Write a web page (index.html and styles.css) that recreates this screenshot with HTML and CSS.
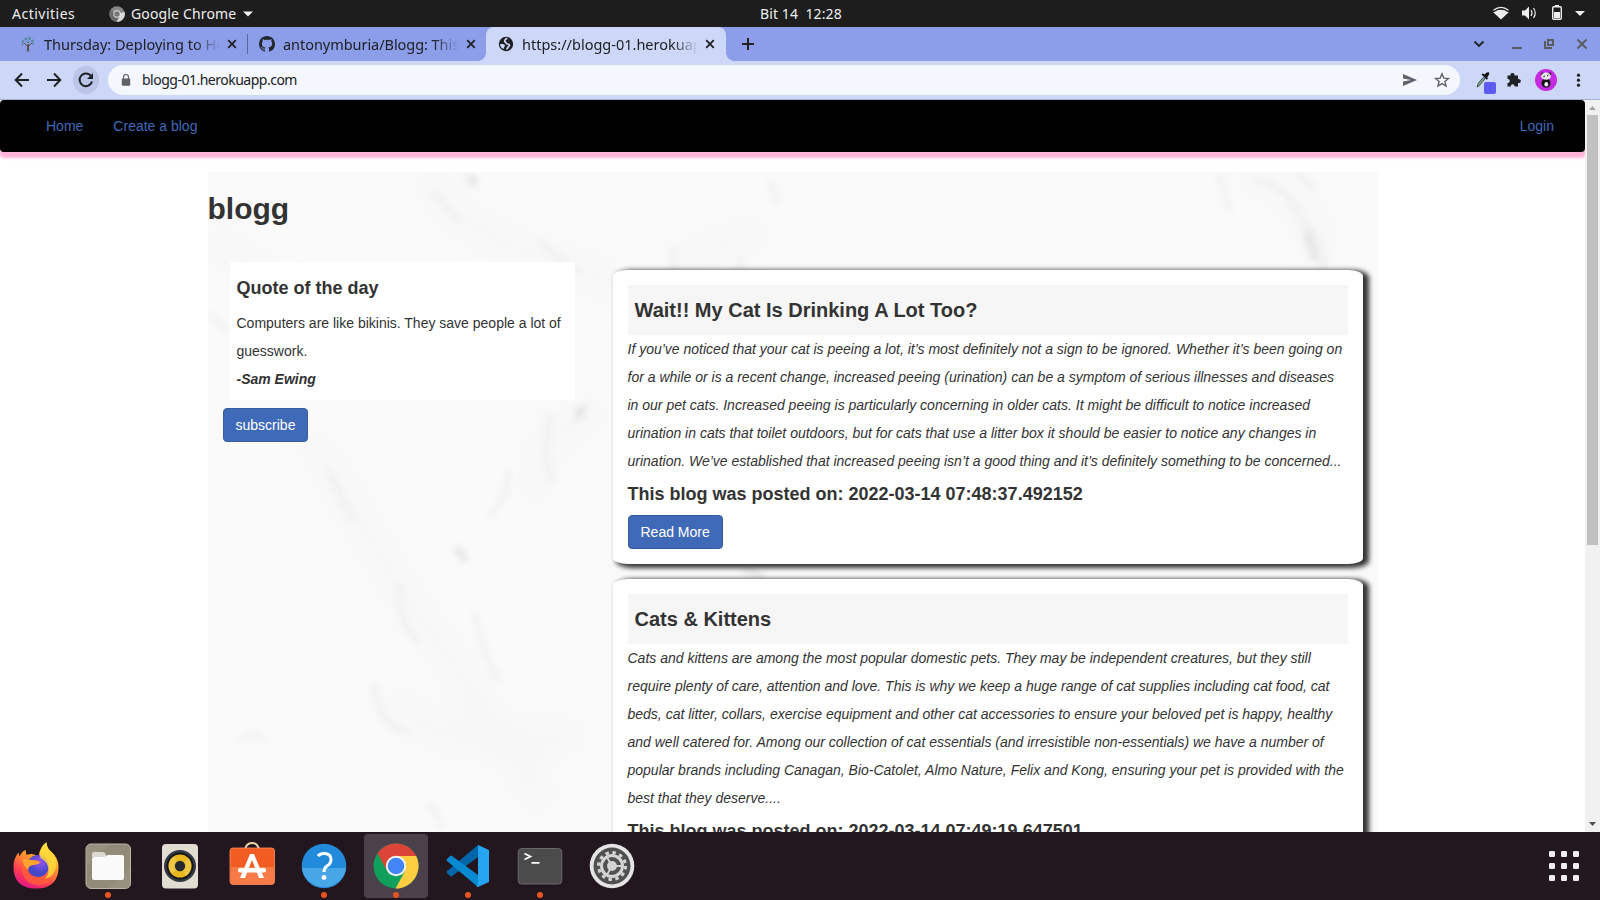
FILE: index.html
```html
<!DOCTYPE html>
<html lang="en">
<head>
<meta charset="utf-8">
<title>blogg</title>
<link rel="stylesheet" href="styles.css">
</head>
<body>
<div class="desktop">
  <header class="topbar">
    <span class="activities">Activities</span>
    <svg class="app-icon" width="16" height="16" viewBox="0 0 16 16"><circle cx="8" cy="8" r="7.700" fill="#888"/><path d="M8 8 15.600 6A7.700 7.700 0 0 1 7.500 15.700L11 9.500Z" fill="#d9d9d9"/><path d="M8 8 1.500 4A7.700 7.700 0 0 0 7.500 15.700L10 11Z" fill="#6a6a6a"/><circle cx="8" cy="8" r="3.700" fill="#ddd"/><circle cx="8" cy="8" r="2.700" fill="#777"/></svg>
    <span class="app-name">Google Chrome</span>
    <svg class="app-caret" width="10" height="6" viewBox="0 0 10 6"><path d="M0 .5h10L5 5.500z" fill="#eee"/></svg>
    <span class="clock">Bit 14&nbsp; 12:28</span>
    <svg class="tray" width="100" height="27" viewBox="0 0 100 27" fill="#eee">
      <path d="M3.200 12.200Q11 6.200 18.800 12.200L11 19.500Z"/><path d="M3.500 10.200Q11 4.500 18.500 10.200" fill="none" stroke="#eee" stroke-width="1.300"/><path d="M4 11.600Q11 6.700 18 11.600" fill="none" stroke="#1d1d1d" stroke-width="1"/>
      <path d="M32 10.500h3l4-4v13l-4-4h-3z"/><path d="M41 10q2 3 0 6M43.500 8q3.500 5 0 10" fill="none" stroke="#eee" stroke-width="1.200"/>
      <rect x="62.700" y="6.700" width="8.600" height="12.600" rx="1" fill="none" stroke="#eee" stroke-width="1.400"/><path d="M65 5h4v1.500h-4zM64 12h6v6h-6z"/>
      <path d="M85 11h10l-5 5z"/>
    </svg>
  </header>

  <div class="tabs">
    <div class="tab first">
      <svg width="16" height="16" viewBox="0 0 16 16"><path d="M7.300 15.500 8 8M8.700 15.500 8.500 8M8 11 4 7M8.500 10 12 7" stroke="#594f49" stroke-width="1" fill="none"/><g fill="#55889a"><circle cx="3" cy="5.500" r="1.300"/><circle cx="6" cy="3" r="1.400"/><circle cx="9.500" cy="2.500" r="1.400"/><circle cx="12.500" cy="5" r="1.400"/><circle cx="8" cy="6" r="1.300"/><circle cx="2.500" cy="8" r="1"/><circle cx="13" cy="8" r="1"/></g></svg>
      <span class="tab-title">Thursday: Deploying to Heroku</span>
      <svg class="close" width="10" height="10" viewBox="0 0 10 10"><path d="M1.200 1.200l7.600 7.600M8.800 1.200 1.200 8.800"/></svg>
    </div>
    <div class="tab second">
      <svg width="16" height="16" viewBox="0 0 16 16"><path fill="#24292f" d="M8 0C3.580 0 0 3.580 0 8c0 3.540 2.290 6.530 5.470 7.590.4.070.55-.17.55-.38 0-.19-.01-.82-.01-1.490-2.010.37-2.530-.49-2.690-.94-.09-.23-.48-.94-.82-1.130-.28-.15-.68-.52-.01-.53.63-.01 1.080.58 1.230.82.72 1.210 1.870.87 2.330.66.07-.52.28-.87.51-1.070-1.780-.2-3.640-.89-3.640-3.950 0-.87.31-1.590.82-2.150-.08-.2-.36-1.020.08-2.120 0 0 .67-.21 2.200.82.64-.18 1.320-.27 2-.27s1.360.09 2 .27c1.530-1.040 2.200-.82 2.200-.82.44 1.100.16 1.920.08 2.120.51.56.82 1.270.82 2.150 0 3.070-1.870 3.750-3.650 3.950.29.25.54.73.54 1.480 0 1.070-.01 1.930-.01 2.200 0 .21.15.46.55.38A8.010 8.010 0 0 0 16 8c0-4.420-3.580-8-8-8z"/></svg>
      <span class="tab-title">antonymburia/Blogg: This is</span>
      <svg class="close" width="10" height="10" viewBox="0 0 10 10"><path d="M1.200 1.200l7.600 7.600M8.800 1.200 1.200 8.800"/></svg>
    </div>
    <div class="tab active">
      <svg width="16" height="16" viewBox="0 0 16 16"><circle cx="8" cy="8" r="7.200" fill="#202124"/><path d="M9.300 2.200C8 3 6.500 3.600 6.700 5c.2 1.200 1.200.8 1.300 1.900.1 1.200 1.600.9 2.700 1.300 1.200.5.600 2-.4 2.700-.9.700-.6 1.800-1.800 2.600" fill="none" stroke="#cdd7f8" stroke-width="1.700"/><path d="M2 8.300c1.500-.4 4-.2 4.800.9.700 1-.8 1.300-.7 2.200 0 .8-.6 1.100-1.200 1.400C3.200 11.800 2.100 10.200 2 8.300z" fill="#cdd7f8"/></svg>
      <span class="tab-title">https://blogg-01.herokuapp.com</span>
      <svg class="close" width="10" height="10" viewBox="0 0 10 10"><path d="M1.200 1.200l7.600 7.600M8.800 1.200 1.200 8.800"/></svg>
    </div>
    <svg class="new-tab" width="12" height="12" viewBox="0 0 12 12"><path d="M6 0v12M0 6h12" stroke="#202124" stroke-width="2"/></svg>
    <svg class="window-controls" width="120" height="34" viewBox="0 0 120 34" fill="none" stroke="#5a5c60" stroke-width="2">
      <path d="M4.500 14.500 9 19l4.500-4.500" stroke="#202124" stroke-width="1.800"/><path d="M42 21h10"/><path d="M78 13h5v5h-5zM75 14v7h7"/><path d="M107.500 12.500l9 9M116.500 12.500l-9 9"/>
    </svg>
  </div>

  <div class="toolbar">
    <svg class="nav-arrows" width="108" height="38" viewBox="0 0 108 38" fill="none" stroke="#202124" stroke-width="2">
      <path d="M29 19H16M22 12.500 15.700 19 22 25.500M47 19h13M54 12.500 60.300 19 54 25.500"/>
      <ellipse cx="86" cy="19" rx="13" ry="14" fill="#bac5e8" stroke="none"/>
      <path d="M91.300 15.500A6.300 6.300 0 1 0 92 20.500"/><path d="M93 12v6h-6z" fill="#202124" stroke="none"/>
    </svg>
    <div class="address">
      <svg width="10" height="12" viewBox="0 0 10 12"><path d="M2.500 5V3a2.500 2.500 0 0 1 5 0v2" fill="none" stroke="#5f6368" stroke-width="1.200"/><rect x=".8" y="4.500" width="8.400" height="7.300" rx="1" fill="#5f6368"/></svg>
      <span class="url">blogg-01.herokuapp.com</span>
      <svg class="address-actions" width="50" height="16" viewBox="0 0 50 16"><path d="M1 2 15 8 1 14V9.500L9 8 1 6.500z" fill="#5f6368"/><path d="m40 1.800 1.800 4.300 4.600.4-3.500 3 1.100 4.600-4-2.500-4 2.500 1.100-4.600-3.500-3 4.600-.4z" fill="none" stroke="#5f6368" stroke-width="1.400"/></svg>
    </div>
    <svg class="extensions" width="140" height="38" viewBox="0 0 140 38">
      <path d="M17.300 26q0-3 2-5l4-4.500 1.700 1.500-4 4.500q-1.500 2.500-3.700 3.500z" fill="#7fae92" stroke="#26352c" stroke-width=".8"/><path d="M21.500 13.500l1.500-1 1.500 1q2.500-3 4.200-2.200 1.700 1.200-1.500 5l.8 1-1.200 1.500z" fill="#111"/>
      <rect x="24" y="21" width="12" height="12" rx="2" fill="#5c5cf5"/>
      <path d="M47.500 14.500h3c-.6-3.300 4.600-3.300 4 0H58v3.500c3.800-.5 3.800 4.500 0 4V25.500h-3.500c.3-3-4-3-3.700 0h-3.300v-3.500c3 .3 3-4.200 0-3.900z" fill="#202124"/>
      <circle cx="86" cy="19" r="11" fill="#c42ae0"/><ellipse cx="86" cy="22" rx="4.500" ry="4.700" fill="#141414"/><circle cx="82.500" cy="12.700" r="1.300" fill="#222"/><circle cx="90" cy="12.700" r="1.300" fill="#222"/><ellipse cx="86" cy="15.200" rx="4.800" ry="3.600" fill="#e5e5e5"/><path d="M83.300 15.800l1.700-.8M87 15l1.500-1" stroke="#222"/><ellipse cx="86.300" cy="23.300" rx="1.900" ry="2.200" fill="#eee"/>
      <g fill="#202124"><circle cx="118.500" cy="14.200" r="1.600"/><circle cx="118.500" cy="19.200" r="1.600"/><circle cx="118.500" cy="24.200" r="1.600"/></g>
    </svg>
  </div>

  <div class="viewport">
    <main class="page">
      <nav class="navbar">
        <a>Home</a>
        <a>Create a blog</a>
        <a class="login">Login</a>
      </nav>
      <section class="container">
        <svg class="marble" width="1170" height="660" viewBox="0 0 1170 660" fill="none" stroke="#777">
          <defs><filter id="soft" x="-20%" y="-20%" width="140%" height="140%"><feGaussianBlur stdDeviation="3.500"/></filter><filter id="haze" x="-20%" y="-20%" width="140%" height="140%"><feGaussianBlur stdDeviation="16"/></filter></defs>
          <g filter="url(#haze)" opacity=".025" stroke-width="34"><path d="M215 0Q260 70 350 90T480 210M400 240Q320 250 330 330M0 60Q90 130 150 180M100 260L200 430Q270 520 340 640M180 520Q220 590 380 560M560 60Q480 80 460 100M1030 0Q1120 20 1110 100"/></g>
          <g filter="url(#soft)" stroke-width="4" opacity=".09"><path d="M258 0l6 16M225 20l25 30M330 70l40 30M465 75v30M533 85q-2 40-30 60M562 8l8 24M1045 8q28 2 40 25t25 35q10 20 3 40M1010 0l12 40M1090 0l18 18M380 230l-12 20M342 240q-8 40 2 70M300 300l-4 25-14 20M190 410q0 40 20 60M265 440q12 40 25 70M30 570q15-15 28 0M165 510q5 45 35 50M220 630l15 25M120 300l25 50M0 140l20 20"/></g>
          <path filter="url(#soft)" opacity=".22" stroke-width="5" d="M248 375l10 14M374 236l-5 8M1098 60l10 28M264 4l3 8M535 396l20 8"/>
        </svg>
        <h1 class="site-title">blogg</h1>
        <div class="columns">
          <aside class="sidebar">
            <div class="quote">
              <h4>Quote of the day</h4>
              <p>Computers are like bikinis. They save people a lot of guesswork.</p>
              <p class="author">-Sam Ewing</p>
            </div>
            <a class="btn">subscribe</a>
          </aside>
          <div class="posts">
            <article class="post">
              <h3>Wait!! My Cat Is Drinking A Lot Too?</h3>
              <p>If you’ve noticed that your cat is peeing a lot, it’s most definitely not a sign to be ignored. Whether it’s been going on<br>for a while or is a recent change, increased peeing (urination) can be a symptom of serious illnesses and diseases<br>in our pet cats. Increased peeing is particularly concerning in older cats. It might be difficult to notice increased<br>urination in cats that toilet outdoors, but for cats that use a litter box it should be easier to notice any changes in<br>urination. We’ve established that increased peeing isn’t a good thing and it’s definitely something to be concerned...</p>
              <h4>This blog was posted on: 2022-03-14 07:48:37.492152</h4>
              <a class="btn">Read More</a>
            </article>
            <article class="post">
              <h3>Cats &amp; Kittens</h3>
              <p>Cats and kittens are among the most popular domestic pets. They may be independent creatures, but they still<br>require plenty of care, attention and love. This is why we keep a huge range of cat supplies including cat food, cat<br>beds, cat litter, collars, exercise equipment and other cat accessories to ensure your beloved pet is happy, healthy<br>and well catered for. Among our collection of cat essentials (and irresistible non-essentials) we have a number of<br>popular brands including Canagan, Bio-Catolet, Almo Nature, Felix and Kong, ensuring your pet is provided with the<br>best that they deserve....</p>
              <h4>This blog was posted on: 2022-03-14 07:49:19.647501</h4>
              <a class="btn">Read More</a>
            </article>
          </div>
        </div>
      </section>
    </main>
    <div class="scrollbar">
      <svg width="15" height="15" viewBox="0 0 15 15"><path d="M4 10h7L7.500 6z" fill="#a3a3a3"/></svg>
      <div class="thumb"></div>
      <svg class="down" width="15" height="15" viewBox="0 0 15 15"><path d="M4 5h7L7.500 9z" fill="#505050"/></svg>
    </div>
  </div>

  <footer class="dock">
    <div class="launcher">
      <svg viewBox="0 0 64 64"><defs><linearGradient id="fx" x1=".8" y1="0" x2=".3" y2="1"><stop offset="0" stop-color="#fff44f"/><stop offset=".4" stop-color="#ff9c2a"/><stop offset=".75" stop-color="#ff3e50"/><stop offset="1" stop-color="#e01585"/></linearGradient><radialGradient id="fxp" cx=".6" cy=".3"><stop offset="0" stop-color="#9a55f0"/><stop offset="1" stop-color="#4548c8"/></radialGradient></defs><path d="M9.500 33q0-9 5-14.500l1 4q2-5 6-6.500l1 5q7-3 12 2 1-10 8-15 0 6 5 10 7 6 7 15 0 21.500-22.500 21.500T9.500 33z" fill="url(#fx)"/><circle cx="34" cy="32" r="11" fill="url(#fxp)"/><path d="M18 27q7-2 12-1 6 0 6 2-3 2-8 3-3 0-4 4 0 9 12 8 14 0 15-14 3 20-16 22-19 0-17-24z" fill="#ff6235" opacity=".75"/><path d="M18 25q6 1 11 1 6 1 7 3-3 2-7 2-5 1-5 5-4-3-6-11z" fill="#ffa52e"/><path d="M42.500 9q-9 8-6 15 8 4 8 12 0 6-4 9 11-2 12-14 0-9-5-13-5-4-5-9z" fill="#ffdb3b" opacity=".85"/></svg>
    </div>
    <div class="launcher running">
      <svg viewBox="0 0 64 64"><rect x="10" y="10" width="44.500" height="44.500" rx="5" fill="#928b78" stroke="#bdb6a5"/><path d="M11 32 32 11H16q-5 0-5 5zM33 54l21-21v16q0 5-5 5z" fill="#a39c8a" opacity=".4"/><path d="M16 23v-3q0-2 2-2h9q2 0 3 3l1 2z" fill="#dcd9d2"/><path d="M16 25q0-2 2-2h10l4-2h14q2 0 2 2v21q0 2-2 2H18q-2 0-2-2z" fill="#fafafa"/></svg>
    </div>
    <div class="launcher">
      <svg viewBox="0 0 64 64"><rect x="14" y="10" width="36" height="44.500" rx="4" fill="#e2ddd2"/><circle cx="32" cy="32" r="16" fill="#343943"/><circle cx="32" cy="32" r="13.500" fill="#15181d"/><circle cx="32" cy="32" r="11.500" fill="#e8b61f"/><path d="M32 32 40 24A11.500 11.500 0 0 1 38 41.800zM32 32 24 40A11.500 11.500 0 0 1 26 22.200z" fill="#f7d365" opacity=".5"/><circle cx="32" cy="32" r="5.200" fill="#25282d"/></svg>
    </div>
    <div class="launcher">
      <svg viewBox="0 0 64 64"><path d="M25 17v-1q1-7 7-7t7 7v1" fill="none" stroke="#ead7ad" stroke-width="2"/><rect x="10" y="14" width="44.500" height="36.500" rx="3" fill="#f05c22" stroke="#fb9063" stroke-width=".8"/><path d="M11 33h43v15q0 2-2 2H13q-2 0-2-2z" fill="#ff986a" opacity=".5"/><path d="M30 20h4l10 24h-5L32 26l-7 18h-5z" fill="#fff"/><rect x="18" y="34" width="28" height="4.500" rx="2" fill="#fff"/></svg>
    </div>
    <div class="launcher running">
      <svg viewBox="0 0 64 64"><circle cx="32" cy="32" r="22.300" fill="#228adb"/><path d="M9.900 34h44.200A22.300 22.300 0 0 1 9.900 34z" fill="#47a6e6"/><path d="M26 22q2-2.500 6-2.500 7 0 7 6 0 4-4 6.500-3 2-3 6" fill="none" stroke="#fff" stroke-width="3"/><circle cx="32" cy="43.500" r="2.400" fill="#fff"/></svg>
    </div>
    <div class="launcher running selected">
      <svg viewBox="0 0 64 64"><circle cx="32" cy="32" r="22.500" fill="#119f5c"/><path d="M13.500 19.300A22.500 22.500 0 0 1 52.200 22H32L22.500 36Z" fill="#dc4437"/><path d="M32 22h20.200A22.500 22.500 0 0 1 31.500 54.500L41 37z" fill="#ffcd40"/><circle cx="32" cy="32" r="10.200" fill="#f4f4f4"/><circle cx="32" cy="32" r="8.300" fill="#4385f4"/></svg>
    </div>
    <div class="launcher running">
      <svg viewBox="0 0 64 64"><path d="M42 23 16 42q-1 1-2 0l-3-3q-1-1 0-2L42 11z" fill="#0066a9"/><path d="M42 41 16 22q-1-1-2 0l-3 3q-1 1 0 2l31 26z" fill="#078ad2"/><path d="M42 11 53 16v32l-11 5q-1 0-2-1l2-1z" fill="#25a5f1"/></svg>
    </div>
    <div class="launcher running">
      <svg viewBox="0 0 64 64"><rect x="10.200" y="14.500" width="43.600" height="35.500" rx="3.500" fill="#4b4b4b" stroke="#777" stroke-width=".8"/><path d="M16.500 19.500l6 3-6 3M23.500 28.800h8" fill="none" stroke="#fff" stroke-width="1.700"/></svg>
    </div>
    <div class="launcher">
      <svg viewBox="0 0 64 64"><circle cx="32" cy="32" r="22.300" fill="#e4e4e4"/><circle cx="32" cy="32" r="18.500" fill="#505050"/><circle cx="32" cy="32" r="13.500" fill="none" stroke="#d4d4d4" stroke-width="3" stroke-dasharray="3.500 3.570"/><circle cx="32" cy="32" r="10.500" fill="none" stroke="#d4d4d4" stroke-width="3"/><path d="M32 32h10M32 32l-5 8.700M32 32l-5-8.700" stroke="#d4d4d4" stroke-width="1.800"/><circle cx="32" cy="32" r="5" fill="#d4d4d4"/></svg>
    </div>
    <svg class="app-grid" width="30" height="30" viewBox="0 0 30 30" fill="#eee"><rect width="6" height="6" rx="1.300"/><rect x="12" width="6" height="6" rx="1.300"/><rect x="24" width="6" height="6" rx="1.300"/><rect y="12" width="6" height="6" rx="1.300"/><rect x="12" y="12" width="6" height="6" rx="1.300"/><rect x="24" y="12" width="6" height="6" rx="1.300"/><rect y="24" width="6" height="6" rx="1.300"/><rect x="12" y="24" width="6" height="6" rx="1.300"/><rect x="24" y="24" width="6" height="6" rx="1.300"/></svg>
  </footer>
</div>
</body>
</html>
```

FILE: styles.css
```css
* { box-sizing: border-box; }
body { margin: 0; overflow: hidden; background: #fff; }
svg { display: block; flex: none; }
h1, h3, h4, p { margin: 0; }

.desktop {
  width: 1600px;
  height: 900px;
  display: flex;
  flex-direction: column;
  font-family: "Noto Sans", "Open Sans", sans-serif;
}

/* Desktop top bar */
.topbar {
  height: 27px;
  flex: none;
  display: grid;
  grid-template-columns: 97px 22px 108px 521px 1fr 110px;
  align-items: center;
  padding-left: 12px;
  background: #1d1d1d;
  color: #eee;
  font-size: 14px;
  white-space: nowrap;
}
.activities { letter-spacing: .5px; }
.app-name { letter-spacing: .15px; }
.app-caret { margin-left: 4px; }
.clock { letter-spacing: .1px; }

/* Browser tab strip */
.tabs {
  height: 34px;
  flex: none;
  display: flex;
  align-items: center;
  padding-left: 8px;
  background: #8c9eea;
  color: #202124;
}
.tab {
  width: 239px;
  height: 34px;
  display: flex;
  align-items: center;
  padding-left: 12px;
}
.tab.second {
  background: linear-gradient(#5c6796, #5c6796) 0 7px / 1px 20px no-repeat;
}
.tab-title {
  width: 176px;
  margin-left: 8px;
  overflow: hidden;
  white-space: nowrap;
  line-height: 20px;
  padding-bottom: 1px;
  font-size: 14.500px;
  -webkit-mask-image: linear-gradient(90deg, #000 150px, transparent 176px);
  mask-image: linear-gradient(90deg, #000 150px, transparent 176px);
}
.second .tab-title { letter-spacing: -.05px; }
.tab.active {
  width: 240px;
  border-radius: 8px 8px 0 0;
  background: #cdd7f8;
  position: relative;
}
.tab.active::before, .tab.active::after {
  content: "";
  position: absolute;
  bottom: 0;
  width: 8px;
  height: 8px;
}
.tab.active::before { left: -8px; background: radial-gradient(circle at 0 0, transparent 7.500px, #cdd7f8 8px); }
.tab.active::after { right: -8px; background: radial-gradient(circle at 100% 0, transparent 7.500px, #cdd7f8 8px); }
.close { margin-left: 7px; fill: none; stroke: #202124; stroke-width: 1.800; }
.new-tab { margin-left: 16px; }
.window-controls { margin-left: auto; margin-right: 10px; }

/* Browser toolbar */
.toolbar {
  height: 39px;
  flex: none;
  display: flex;
  background: #cdd7f8;
  border-bottom: 1px solid #a3afd0;
}
.address {
  width: 1352px;
  height: 30px;
  margin-top: 4px;
  padding: 0 8px 0 13px;
  display: flex;
  align-items: center;
  border-radius: 15px;
  background: #f4f7fe;
}
.url {
  margin-left: 11px;
  padding-bottom: 1px;
  font-size: 14px;
  letter-spacing: -.5px;
  color: #202124;
  white-space: nowrap;
}
.address-actions { margin-left: auto; }

/* Web page */
.viewport {
  height: 732px;
  flex: none;
  display: flex;
  overflow: hidden;
  background: #fff;
}
.page {
  width: 1585px;
  height: 732px;
  overflow: hidden;
  font-family: "Liberation Sans", Arial, sans-serif;
  font-size: 14px;
  line-height: 28px;
  color: #333;
}
.navbar {
  height: 52px;
  display: flex;
  align-items: center;
  gap: 30px;
  padding: 0 31px 0 46px;
  border-radius: 4px;
  background: #000;
  box-shadow: 0 5px 3px 1px #ffb3d9;
  color: #3f6ab7;
}
.login { margin-left: auto; }
.container {
  position: relative;
  width: 1170px;
  height: 900px;
  margin: 20px auto 0;
  background: #fafafa;
}
.marble { position: absolute; top: 0; left: 0; }
.site-title { position: relative; padding-top: 20px; font-size: 30px; line-height: 33px; }
.columns {
  position: relative;
  display: flex;
  align-items: flex-start;
  padding: 37px 15px 0;
}
.sidebar { width: 390px; }
.quote {
  width: 345px;
  height: 138px;
  margin: 0 0 8px 7px;
  padding: 16px 7px 0;
  background: #fff;
}
.quote h4 { margin-bottom: 11px; }
h4 { font-size: 18px; line-height: 20px; }
.author { font-weight: bold; font-style: italic; }
.btn {
  display: inline-block;
  height: 34px;
  padding: 6px 12px;
  border: 1px solid #355d9f;
  border-radius: 4px;
  background: #3f6ab7;
  color: #fff;
  line-height: 20px;
  vertical-align: top;
}
.posts { width: 750px; padding-top: 8px; }
.post {
  margin-bottom: 15px;
  padding: 15px;
  border-radius: 2%;
  background: #fff;
  box-shadow: 4.500px 2px 5px 1.500px #333;
}
.post h3 {
  height: 50px;
  padding: 14px 7px;
  background: #f6f6f6;
  font-size: 20px;
  line-height: 22px;
}
.post p { font-style: italic; white-space: nowrap; }
.post h4 { margin: 9px 0 11px; }

.scrollbar {
  width: 15px;
  height: 732px;
  display: flex;
  flex-direction: column;
  align-items: center;
  background: #f1f1f1;
}
.thumb { width: 11px; height: 430px; background: #c1c1c1; }
.down { margin-top: auto; }

/* Dock */
.dock {
  height: 68px;
  flex: none;
  display: flex;
  gap: 8px;
  padding: 2px 21px 2px 4px;
  background: #22161f;
}
.launcher {
  position: relative;
  width: 64px;
  height: 64px;
  border-radius: 4px;
}
.launcher svg { width: 64px; height: 64px; }
.launcher.selected { background: #4b414a; }
.running::after {
  content: "";
  position: absolute;
  left: 29px;
  bottom: 0;
  width: 6px;
  height: 6px;
  border-radius: 50%;
  background: #e95420;
}
.app-grid { margin: 17px 0 0 auto; }
```
